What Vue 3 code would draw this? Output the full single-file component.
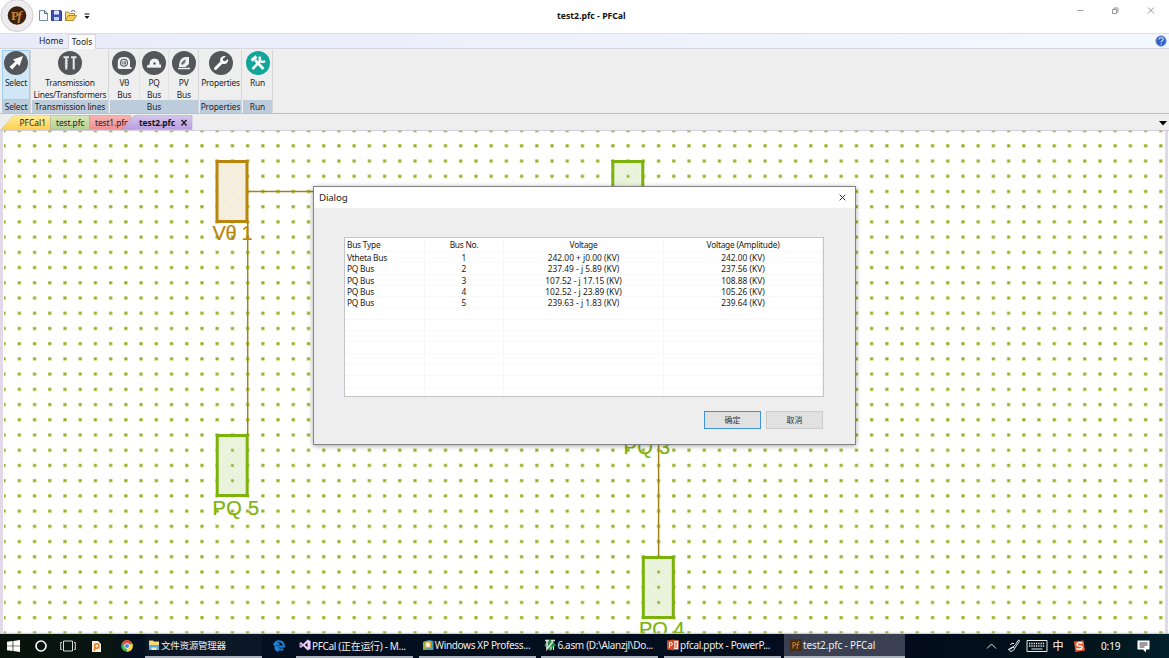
<script setup>
const tools = [
  { name: 'Select', cls: 'g-select', items: [{ icon: 'arrow', lines: ['Select'], on: true }] },
  { name: 'Transmission lines', cls: 'g-trans', items: [{ icon: 'screws', lines: ['Transmission', 'Lines/Transformers'] }] },
  { name: 'Bus', cls: 'g-bus', items: [
    { icon: 'tape', lines: ['Vθ', 'Bus'] },
    { icon: 'helmet', lines: ['PQ', 'Bus'] },
    { icon: 'saw', lines: ['PV', 'Bus'] }
  ] },
  { name: 'Properties', cls: 'g-prop', items: [{ icon: 'wrench', lines: ['Properties'] }] },
  { name: 'Run', cls: 'g-run', items: [{ icon: 'hammer', lines: ['Run'] }] }
]
const rows = [
  ['Vtheta Bus', '1', '242.00 + j0.00 (KV)', '242.00 (KV)'],
  ['PQ Bus', '2', '237.49 - j 5.89 (KV)', '237.56 (KV)'],
  ['PQ Bus', '3', '107.52 - j 17.15 (KV)', '108.88 (KV)'],
  ['PQ Bus', '4', '102.52 - j 23.89 (KV)', '105.26 (KV)'],
  ['PQ Bus', '5', '239.63 - j 1.83 (KV)', '239.64 (KV)']
]
const blanks = 8
</script>

<template>
  <div class="window">
    <header class="titlebar">
      <svg class="orb" width="34" height="33" viewBox="0 0 34 33">
        <circle cx="17" cy="15.5" r="16" fill="#ececee" stroke="#cfcfd3" />
        <circle cx="17" cy="15.5" r="9.3" fill="#3a2112" />
        <text x="11" y="20" class="orb-text">P</text>
        <text x="17.5" y="20" class="orb-text orb-f">f</text>
      </svg>
      <svg class="quick" width="42" height="14" viewBox="0 0 42 14">
        <path d="M2.500 2.500h5l3 3v7h-8z" fill="#f6fafd" stroke="#6d8da2" />
        <path d="M7.500 2.500v3h3" fill="none" stroke="#4d6d82" />
        <path d="M14.500 2.500h9l1 1v9h-10z" fill="#3f51b4" stroke="#2b3688" />
        <path d="M17 2.500h5v4h-5z" fill="#dfe6fa" /><path d="M17 9h5v3.500h-5z" fill="#c9d3f0" />
        <path d="M28.500 12.500v-8.500h3l1 1.500h5v2" fill="#f6df8a" stroke="#b08a2c" />
        <path d="M28.500 12.500l2.500-5h8.500l-3 5z" fill="#f5cb55" stroke="#b08a2c" />
        <path d="M34 3.500q2.500-2.500 4.500.5" fill="none" stroke="#555" />
      </svg>
      <svg class="qdrop" width="6" height="7"><path d="M0.500 1h5" stroke="#111" /><path d="M0.500 3h5L3 6z" fill="#111" /></svg>
      <b class="title">test2.pfc - PFCal</b>
      <svg class="winbtns" width="80" height="10" viewBox="0 0 80 10" fill="none" stroke="#999">
        <path d="M0.500 5.500h6M35.500 4.500h4v4h-4zM37 4.500v-1.500h4v4h-1.500M71 2.500l6 6M77 2.500l-6 6" />
      </svg>
    </header>

    <nav class="menu">
      <span class="m-home">Home</span>
      <span class="m-tools">Tools</span>
      <svg class="help" width="12" height="12" viewBox="0 0 12 12">
        <circle cx="6" cy="6" r="5.200" fill="#2f62c8" stroke="#86a0cf" />
        <path d="M4 4.600Q4 2.800 6.100 2.800T8.200 4.500Q8.200 5.500 6.200 6.500v.8M6.200 8.300v1.300" fill="none" stroke="#dfe9fb" stroke-width="1.100" />
      </svg>
    </nav>

    <section class="ribbon">
      <div v-for="g in tools" :key="g.name" class="group" :class="g.cls">
        <div class="items">
          <div v-for="t in g.items" :key="t.icon" class="tool" :class="{ on: t.on }">
            <svg class="ticon" width="24" height="24" viewBox="0 0 24 24">
              <circle cx="12" cy="12" r="12" :fill="t.icon === 'hammer' ? '#12a59a' : '#55565a'" />
              <path v-if="t.icon === 'arrow'" d="M19 5l-3.500 10-2.300-2.300-5 5.800-2.700-2.700 5.800-5-2.300-2.300z" fill="#fff" />
              <g v-else-if="t.icon === 'screws'" fill="none" stroke="#e8e8e8">
                <path d="M5.500 6.300h5.500M13 6.300h5.500" stroke-width="2" />
                <path d="M8.300 7v11.500M15.700 7v11.500" stroke-width="2" />
                <path d="M6.800 10.500l3-1M6.800 13l3-1M6.800 15.500l3-1" />
              </g>
              <g v-else-if="t.icon === 'tape'">
                <path d="M5.800 17v-6q0-5 6.200-5t6 5v5h1.500v2H7z" fill="#f2f2f2" />
                <circle cx="12" cy="11.800" r="4" fill="#55565a" /><circle cx="12" cy="11.800" r="3" fill="#ddd" />
                <path d="M10.700 10.500v2.600M12.300 10.600h1.200v2.500h-1.200z" fill="none" stroke="#55565a" stroke-width=".7" />
              </g>
              <g v-else-if="t.icon === 'helmet'">
                <path d="M7.500 13.500q0-6 5-6t5 6h1.500v2.500H5v-1.500z" fill="#f2f2f2" />
                <circle cx="12.500" cy="12.500" r="1.200" fill="#55565a" /><path d="M5 16.500h14" stroke="#bbb" />
              </g>
              <g v-else-if="t.icon === 'saw'">
                <path d="M7 14.500q0-7 6-8.500h4v7l-3.500 3H7z" fill="#f0f0f0" />
                <path d="M9 13q1-4 5-4.500l-1 3.500-2.500 2z" fill="#77787b" />
                <path d="M6 17.500h12" stroke="#eee" stroke-width="1.500" />
              </g>
              <g v-else-if="t.icon === 'wrench'">
                <path d="M6.500 17.500l6.500-6.500" stroke="#fff" stroke-width="3" stroke-linecap="round" />
                <path d="M17 5.500a4 4 0 1 0 2 2.500l-2.800 2.300-2-.5-.5-2z" fill="#fff" />
              </g>
              <g v-else fill="none" stroke="#fff">
                <path d="M9 9l8.500 9" stroke-width="2.600" />
                <path d="M5.500 9.500l5-4" stroke-width="3" />
                <path d="M6.500 18l8-8.500" stroke-width="2.600" />
                <path d="M14 5.500q-1 4 1 5t4-.5" stroke-width="2.400" />
              </g>
            </svg>
            <span v-for="l in t.lines" :key="l" class="tline">{{ l }}</span>
          </div>
        </div>
        <div class="gname">{{ g.name }}</div>
      </div>
    </section>

    <section class="tabs">
      <svg class="tabshape" width="194" height="15" viewBox="0 0 194 15">
        <defs>
          <linearGradient id="ty" x2="0" y2="1"><stop offset="0" stop-color="#fff09a" /><stop offset="1" stop-color="#ffd052" /></linearGradient>
          <linearGradient id="tg" x2="0" y2="1"><stop offset="0" stop-color="#d8e8b8" /><stop offset="1" stop-color="#b5cf92" /></linearGradient>
          <linearGradient id="tr" x2="0" y2="1"><stop offset="0" stop-color="#f8b4b2" /><stop offset="1" stop-color="#f08e90" /></linearGradient>
          <linearGradient id="tp" x2="0" y2="1"><stop offset="0" stop-color="#d5c6ed" /><stop offset="1" stop-color="#b99ddf" /></linearGradient>
        </defs>
        <path d="M1 14.500L12 2Q13.500.5 16 .5h35v14z" fill="url(#ty)" stroke="#d5c990" stroke-width=".6" />
        <path d="M50.500.5h39v14h-39z" fill="url(#tg)" stroke="#a9a9a9" stroke-width=".6" />
        <path d="M89.500.5h41v14h-41z" fill="url(#tr)" stroke="#b9a0a0" stroke-width=".6" />
        <text x="19.500" y="11" class="tab-text" textLength="26.500">PFCal1</text>
        <text x="56" y="11" class="tab-text" textLength="28.500">test.pfc</text>
        <text x="95" y="11" class="tab-text" textLength="33">test1.pfc</text>
        <path d="M122 14.500L132 2.500Q134 .5 137 .5h55v14z" fill="url(#tp)" stroke="#b7a8cd" stroke-width=".6" />
        <text x="139" y="11" class="tab-text strong" textLength="36">test2.pfc</text>
        <path d="M181.500 5l5 5.500M186.500 5l-5 5.500" stroke="#222" stroke-width="1.500" />
      </svg>
      <svg class="tabdrop" width="8" height="5"><path d="M0 0h8L4 4.500z" fill="#000" /></svg>
    </section>

    <main class="canvas">
      <svg class="diagram" width="1169" height="504" viewBox="0 130 1169 504">
        <defs>
          <pattern id="dots" width="15.220" height="15.220" patternUnits="userSpaceOnUse" x="2.300" y="128.900">
            <rect x="0" y="0" width="3.600" height="3.400" fill="#d3de80" />
            <rect x=".5" y=".4" width="2.600" height="2.600" fill="#94a928" />
          </pattern>
          <pattern id="hatchg" width="1.800" height="1.800" patternUnits="userSpaceOnUse" patternTransform="rotate(45)">
            <rect width="1.800" height="1.800" fill="#fafdf5" /><rect width=".55" height="1.800" fill="#c4dfa0" />
          </pattern>
          <pattern id="hatcho" width="1.800" height="1.800" patternUnits="userSpaceOnUse" patternTransform="rotate(45)">
            <rect width="1.800" height="1.800" fill="#fffcf6" /><rect width=".55" height="1.800" fill="#e6cfa6" />
          </pattern>
          <pattern id="dots2" width="15.220" height="15.220" patternUnits="userSpaceOnUse" x="2.500" y="129">
            <rect x=".3" y=".3" width="2.700" height="2.700" fill="#93ae24" />
          </pattern>
        </defs>
        <rect x="4" y="130" width="1161" height="504" fill="url(#dots)" />
        <g fill="none" stroke="#a08418" stroke-width="1.500">
          <path d="M248 191.500h70M247.700 222v213M658.600 440v118" />
        </g>
        <rect x="217" y="161.500" width="30" height="60" fill="url(#hatcho)" stroke="#b8860b" stroke-width="3" />
        <g stroke="#7cb30a" stroke-width="3" fill="url(#hatchg)">
          <rect x="217.200" y="435.500" width="30" height="60" />
          <rect x="612.800" y="161.500" width="30" height="60" />
          <rect x="643.300" y="557.500" width="30" height="60" />
        </g>
        <g fill="url(#dots2)">
          <path d="M222 440h20v51h-20zM618 165h20v51h-20zM648 562h20v51h-20z" />
        </g>
        <g class="bus-label">
          <text x="212.500" y="240" textLength="40" class="orange">Vθ 1</text>
          <text x="212.500" y="514.500" textLength="46.500">PQ 5</text>
          <text x="623.500" y="454" textLength="46.500">PQ 3</text>
          <text x="639" y="636" textLength="45.500">PQ 4</text>
        </g>
        <path d="M1.500 130v504M1166.500 130v504" stroke="#e0dae8" stroke-width="3" />
        <path d="M0 130.300h1169M0 633.300h1169" stroke="#c9c2d6" stroke-width="1" />
      </svg>

      <section class="dialog">
        <div class="dhead"><span>Dialog</span>
          <svg width="7" height="7" viewBox="0 0 7 7"><path d="M.7.7l5.600 5.600M6.300.7L.7 6.300" stroke="#333" /></svg>
        </div>
        <div class="dbody">
          <div class="table">
            <div class="tr th"><span>Bus Type</span><span>Bus No.</span><span>Voltage</span><span>Voltage (Amplitude)</span></div>
            <div v-for="r in rows" :key="r[1]" class="tr"><span v-for="c in r" :key="c">{{ c }}</span></div>
            <div v-for="n in blanks" :key="n" class="tr"><span /><span /><span /><span /></div>
          </div>
          <div class="buttons"><button class="ok">确定</button><button>取消</button></div>
        </div>
      </section>
    </main>

    <footer class="taskbar">
      <div class="cell"><svg width="13" height="12" viewBox="0 0 13 12"><path d="M0 1.800l5.600-.8v4.700H0zM6.300.9L13 0v5.700H6.300zM0 6.300h5.600V11L0 10.200zM6.300 6.300H13V12l-6.700-.9z" fill="#fff" /></svg></div>
      <div class="cell"><svg width="12" height="12"><circle cx="6" cy="6" r="5" fill="none" stroke="#fff" stroke-width="1.600" /></svg></div>
      <div class="cell"><svg width="16" height="12" viewBox="0 0 16 12" fill="none" stroke="#ddd"><path d="M3.500 1h9v10h-9zM2 2.500H.7v7H2M14 2.500h1.300v7H14" /></svg></div>
      <div class="cell note"><svg width="9" height="11" viewBox="0 0 9 11"><path d="M0 0h6l3 3v8H0z" fill="#f7eee4" /><circle cx="4.800" cy="5" r="2.200" fill="none" stroke="#e47a20" stroke-width="1.500" /><path d="M3.500 7L2 9.500" stroke="#e47a20" stroke-width="1.500" /></svg></div>
      <div class="cell chrome"><svg width="12" height="12" viewBox="0 0 12 12"><circle cx="6" cy="6" r="5.800" fill="#4aae4d" /><path d="M6 6L.9 3.200A5.800 5.800 0 0 1 11.300 3.500H6z" fill="#e14b3b" /><path d="M6 6l5.300-2.500A5.800 5.800 0 0 1 6 11.800z" fill="#f8cf3c" /><circle cx="6" cy="6" r="2.700" fill="#fff" /><circle cx="6" cy="6" r="2.100" fill="#4a87e8" /></svg></div>
      <div class="task explorer"><svg width="12" height="12" viewBox="0 0 12 12"><path d="M1 1.500h4l1 1h5v8.500H1z" fill="#f8d775" /><path d="M1 6h10v5H1z" fill="#57aee2" /><path d="M3.500 11V8.500h5V11z" fill="#f6e7b0" /></svg><span>文件资源管理器</span></div>
      <div class="cell edge"><svg width="12" height="12" viewBox="0 0 12 12"><path d="M1 5.500Q2 1.200 6.200 1.200T11 6.500H4.200M4.200 6.500Q4.200 10.500 10.300 9.300M1.800 5.500Q3.700 3.500 6.500 4.200M2.500 6Q2 10 5.500 11" fill="none" stroke="#1a86dc" stroke-width="1.900" /></svg></div>
      <div class="task"><svg width="12" height="12" viewBox="0 0 12 12"><path d="M8.500.8l3 1.200v8l-3 1.200L4.200 7 2 8.800.7 8.200V3.800L2 3.200 4.200 5zM8.500 3.800L5.800 6l2.700 2.200zM1.700 4.800v2.400L3 6z" fill="#ead6f5" stroke="#a66bc9" stroke-width=".4" fill-rule="evenodd" /></svg><span>PFCal (正在运行) - M...</span></div>
      <div class="task"><svg width="12" height="12" viewBox="0 0 12 12"><path d="M1 3l6-2 4.500 1v9H1z" fill="#3b9cbb" /><path d="M1 3h3v8H1z" fill="#83b34b" /><path d="M3.500 3h5v5.500h-5z" fill="#fff" stroke="#f0a12c" stroke-width="1.500" /></svg><span>Windows XP Profess...</span></div>
      <div class="task"><svg width="12" height="12" viewBox="0 0 12 12"><path d="M6 0l6 6-6 6-6-6z" fill="#1e8b3c" /><path d="M1 1.500h4M3 2v8l6-7.500M7 1.500h4" stroke="#ddd" stroke-width="1.600" fill="none" /><path d="M7 7.500v3.500M9.500 7.500v3.500" stroke="#eee" /></svg><span>6.asm (D:\Alanzjl\Do...</span></div>
      <div class="task ppt"><svg width="12" height="12" viewBox="0 0 12 12"><path d="M6 1.500h5.500v9H6z" fill="#f5ece8" stroke="#d24a2b" stroke-width=".7" /><path d="M7.500 4H10M7.500 6H10M7.500 8H10" stroke="#d24a2b" /><path d="M0 1.500L7 .5v11l-7-1z" fill="#d24a2b" /><path d="M2.500 9V3.500h1.300Q5.300 3.500 5.300 5T3.800 6.500H2.500" fill="none" stroke="#fff" /></svg><span>pfcal.pptx - PowerP...</span></div>
      <div class="task active"><svg width="12" height="12" viewBox="0 0 12 12"><path d="M0 0h12v12H0z" fill="#4a2c12" /><path d="M3 9.500v-6h1.300q1.500 0 1.500 1.500T4.300 6.600H3M9.500 2.800Q8 2 7.700 4.500L7 10M6.500 5.500h2.700" fill="none" stroke="#c98632" /></svg><span>test2.pfc - PFCal</span></div>
      <div class="tray">
        <svg width="180" height="24" viewBox="980 0 180 24" fill="none" stroke="#e8e8e8">
          <path d="M987 14.500l4.500-4.500 4.500 4.500" />
          <path d="M1008 15.500q4 0 7.500-5l2.500-4q1.500-1 1.500.8l-4 5.700q-1.500 4-4.500 4.500-2.500-.5-.5-3.500 2.500-2 4 0M1014 9.500q-3-1-3.500 1.500" />
          <path d="M1027 6.500h20v11h-20z" />
          <path d="M1029 9.500h16M1029 12h16" stroke-dasharray="1.300 1" stroke-width="1.300" /><path d="M1031.500 15h11" />
          <path d="M1074 7.500l9.500-1 1.500 10-9.500 1.500z" fill="#ee5a2c" stroke="none" />
          <path d="M1082.500 9q-5-1-5.500 1t2.500 2 2.500 2-5.500.8" stroke="#fff" stroke-width="1.600" />
          <path d="M1137.500 6.500h12v9h-3.500v3l-3-3h-5.500z" fill="#fff" stroke="none" />
          <path d="M1139.500 9h8M1139.500 11h8M1139.500 13h5" stroke="#222" stroke-width=".9" />
          <text x="1052.500" y="16" class="tray-zh">中</text>
          <text x="1101" y="16" class="tray-time" textLength="19.500">0:19</text>
        </svg>
      </div>
    </footer>
  </div>
</template>

<style>
html, body { overflow: hidden; }
</style>

<style scoped>
* { box-sizing: border-box; }
.window { width: 1169px; height: 658px; display: flex; flex-direction: column; background: #fff; overflow: hidden; font-family: "Noto Sans", "Noto Sans CJK SC", sans-serif; font-size: 8.4px; color: #222; }
svg { display: block; flex: none; }
.titlebar { height: 33px; flex: none; display: flex; align-items: flex-start; }
.orb-text { font: bold 13px "Liberation Serif", serif; fill: #c98632; }
.orb-f { font-style: italic; }
.quick { margin: 8px 6px 0 3px; }
.qdrop { margin: 13px 0 0 -1px; }
.title { flex: 1; margin-left: 467px; margin-top: 10px; line-height: 13px; font-size: 8.7px; color: #111; white-space: nowrap; }
.winbtns { margin: 5px 12px 0 0; }
.menu { height: 16px; flex: none; background: linear-gradient(90deg, #e9ebfa, #f3f8fe); border-top: 1px solid #dcdfe9; border-bottom: 1px solid #d4d6dc; display: flex; align-items: center; }
.m-home { width: 68px; padding-left: 39px; font-size: 8.6px; line-height: 14px; }
.m-tools { width: 28px; height: 15px; margin-bottom: -1px; background: #fafafc; border: 1px solid #d4d6dc; border-bottom: 0; text-align: center; font-size: 8.6px; line-height: 15px; letter-spacing: -.1px; }
.help { margin-left: auto; margin-right: 2px; }
.ribbon { height: 65px; flex: none; display: flex; background: #eee; padding: 1px 0 0 2px; border-bottom: 1px solid #bfc0c4; letter-spacing: -.2px; }
.group { height: 63px; display: flex; flex-direction: column; border-right: 1px solid #d5d6d8; margin-right: 1px; text-align: center; white-space: nowrap; }
.items { display: flex; height: 50px; }
.tool { flex: 1 1 0; min-width: 0; display: flex; flex-direction: column; align-items: center; padding-top: 1px; }
.tool.on { background: #d0e7f8; box-shadow: inset 0 0 0 1px #a3cdec; }
.ticon { margin-bottom: 2px; }
.tline { line-height: 12px; height: 12px; }
.gname { height: 13px; line-height: 13px; background: #bdccda; letter-spacing: -.1px; }
.g-select { width: 29px; }
.g-trans { width: 77px; }
.g-bus { width: 89px; }
.g-bus .tool + .tool { border-left: 1px solid #e2e2e2; }
.g-prop { width: 42px; }
.g-run { width: 30px; }
.tabs { height: 16px; flex: none; display: flex; background: #eee; padding-top: 1px; }
.tab-text { font: 8.4px "Noto Sans", sans-serif; fill: #222; }
.strong { font-weight: bold; fill: #111; }
.tabdrop { margin: 6px 2px 0 auto; }
.canvas { height: 504px; flex: none; position: relative; }
.bus-label { font: 20px "Liberation Sans", Arial, sans-serif; fill: #7cb30a; stroke: #7cb30a; stroke-width: .2px; }
.orange { fill: #b8860b; stroke: #b8860b; }
.dialog { position: absolute; left: 313px; top: 56px; width: 543px; height: 259px; border: 1px solid #838383; background: #eee; box-shadow: 0 1px 5px rgba(0,0,0,.35); display: flex; flex-direction: column; }
.dhead { height: 21px; background: #fff; display: flex; align-items: center; justify-content: space-between; padding: 0 9px 0 5px; font-size: 9.8px; letter-spacing: -.2px; }
.dbody { padding: 29px 32px 0 30px; }
.table { width: 480px; height: 160px; background: #fff; border: 1px solid #c4c4c8; overflow: hidden; font-size: 8.4px; color: #1a1a1a; }
.tr { display: grid; grid-template-columns: 80px 79px 160px 159px; height: 11.3px; line-height: 11px; border-bottom: 1px solid #f8f8f8; text-align: center; white-space: nowrap; }
.tr span { border-right: 1px solid #f6f6f6; }
.tr span:first-child { text-align: left; padding-left: 2px; letter-spacing: -.25px; }
.tr.th { height: 14px; line-height: 14px; letter-spacing: -.25px; }
.buttons { display: flex; justify-content: flex-end; gap: 5px; margin-top: 14px; }
.buttons button { width: 57px; height: 18px; padding: 0 0 1px; border: 1px solid #ccc; background: #e1e1e1; font: 8px "Noto Sans CJK SC", sans-serif; color: #333; }
.buttons .ok { border-color: #3f94d8; }
.taskbar { height: 24px; flex: none; display: flex; background: linear-gradient(90deg, #07120d 0, #081510 110px, #04101f 125px, #020c1c 900px, #021219 1080px, #03202b 1169px); color: #eee; }
.cell { width: 27px; flex: none; display: flex; align-items: center; justify-content: center; }
.note { width: 30px; }
.chrome { width: 34px; padding-right: 2px; }
.edge { width: 34px; }
.task { width: 117px; flex: none; margin-right: 5.7px; display: flex; align-items: center; padding-left: 3px; gap: 1px; font-size: 10px; white-space: nowrap; letter-spacing: -.33px; border-bottom: 2px solid #a9b2bd; }
.explorer { background: #0b1726; margin-right: 0; font-size: 9.6px; }
.ppt { margin-right: 3px; }
.active { width: 121px; margin-right: 0; background: #3a4052; padding-left: 6px; letter-spacing: -.15px; }
.tray { margin-left: auto; margin-right: 9px; }
.tray-zh { font: 11px "Noto Sans CJK SC", sans-serif; fill: #fff; stroke: none; }
.tray-time { font: 10px "Noto Sans", sans-serif; fill: #fff; stroke: none; }
</style>
